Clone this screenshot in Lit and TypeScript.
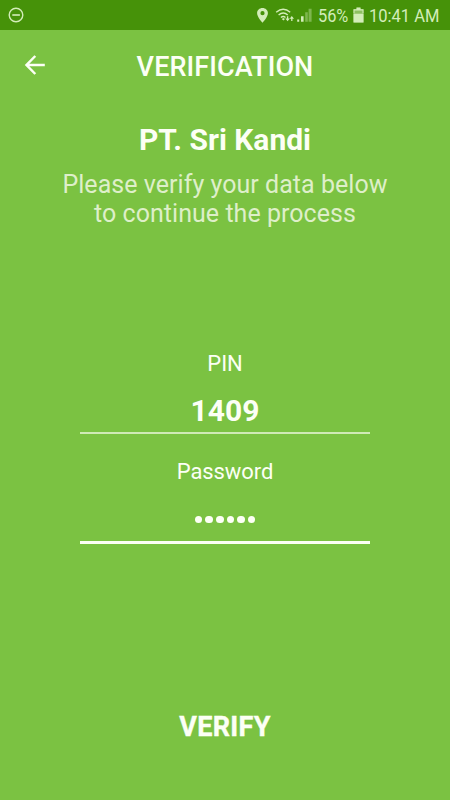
import { LitElement, html, css } from "lit";
import { customElement, property } from "lit/decorators.js";

@customElement("status-bar")
class StatusBar extends LitElement {
  static styles = css`
    :host { display: flex; height: 30px; background: #469209; color: #d3edb9; align-items: center; justify-content: space-between; }
    svg { display: block; flex: none; }
    .notice { margin-left: 8px; }
    .right { display: flex; align-items: center; width: 194px; height: 30px; }
    .wifi { margin-left: 6px; }
    .bars { margin-left: 1px; }
    .battery { margin-left: 5px; }
    .text { font-size: 19px; line-height: 30px; height: 29px; white-space: nowrap; transform-origin: 0 50%; }
    .percent { width: 30px; margin-left: 6px; transform: scaleX(0.86); }
    .clock { width: 72px; margin-left: 5px; transform: scaleX(0.87); }
  `;
  render() {
    return html`
      <svg class="notice" width="16" height="16" viewBox="0 0 16 16" fill="none" stroke="currentColor" stroke-width="1.4">
        <circle cx="8" cy="8" r="6.8"></circle><path d="M4.3 8h7.6" stroke-width="1.6"></path>
      </svg>
      <div class="right">
        <svg width="13" height="18" viewBox="0 0 13 18" fill="currentColor">
          <path fill-rule="evenodd" d="M6.5 2C3.500 2 1.100 4.200 1.100 7.200c0 3.800 5.400 9.500 5.400 9.500s5.400-5.700 5.400-9.500C11.900 4.200 9.500 2 6.500 2zm0 3.100a2.100 2.100 0 1 1 0 4.200 2.100 2.100 0 0 1 0-4.200z"></path>
        </svg>
        <svg class="wifi" width="20" height="18" viewBox="0 0 20 18" fill="none" stroke="currentColor" stroke-width="1.4">
          <path d="M1.200 6.300Q8.200.4 15.200 6.300"></path>
          <path d="M3.600 9Q8.200 5 12.800 9"></path>
          <path d="M5.900 11.500Q8.200 9.600 10.500 11.500"></path>
          <path d="M6.800 12.900l1.600 1.700 1.600-1.700-1.600-.9z" fill="currentColor" stroke="none"></path>
          <path d="M12.600 10.300v3.500M16.800 15v-3.500" stroke-width="1.300"></path>
          <path d="M10.400 12.500h4.400l-2.200 2.700zM14.600 12.700H19L16.800 10z" fill="currentColor" stroke="none"></path>
        </svg>
        <svg class="bars" width="16" height="18" viewBox="0 0 16 18" fill="currentColor">
          <path d="M1.200 13.500h2v2.200h-2zM5 10.300h2.600v5.400H5z"></path>
          <path d="M9.200 6.300h2.600v9.400H9.200zM12.600 2.700h3v13h-3z" opacity=".4"></path>
        </svg>
        <span class="text percent">56%</span>
        <svg class="battery" width="11" height="18" viewBox="0 0 11 18" fill="currentColor">
          <path d="M3.500 1.700h4v1.500h3v13.200H.5V3.200h3z" opacity=".5"></path>
          <path d="M3.500 1.500h4v1.700h3v4h-1V4.500h-8v2.700h-1v-4h3zM.5 7.700h10v8.700H.5z"></path>
        </svg>
        <span class="text clock">10:41 AM</span>
      </div>`;
  }
}

@customElement("data-field")
class DataField extends LitElement {
  @property() label = "";
  @property() value = "";
  @property({ type: Boolean, reflect: true }) secret = false;
  static styles = css`
    :host { display: block; width: 290px; margin: 0 auto; text-align: center; color: #fcfff5; }
    .label { font-size: 22px; line-height: 26px; height: 26px; letter-spacing: -0.1px; }
    .value { font-size: 30px; font-weight: 700; line-height: 36px; height: 36px; margin-top: 16px; border-bottom: 2px solid #d0eab6; padding-bottom: 3px; }
    :host([secret]) .value { border-bottom: 3px solid #fcfff5; display: flex; justify-content: center; align-items: center; gap: 3px; margin-top: 17px; padding-bottom: 3px; }
    .dot { width: 7.600px; height: 7.600px; border-radius: 50%; background: currentColor; }
  `;
  render() {
    return html`
      <div class="label">${this.label}</div>
      <div class="value">${this.secret ? Array.from(this.value, () => html`<span class="dot"></span>`) : this.value}</div>`;
  }
}

@customElement("app-root")
class AppRoot extends LitElement {
  static styles = css`
    :host { display: flex; flex-direction: column; height: 800px; background: #7bc242; color: #fcfff5; font-family: Roboto, sans-serif; }
    header { display: grid; grid-template-columns: 70px 1fr 70px; align-items: center; height: 72px; }
    .back { display: block; margin-left: 24px; margin-bottom: 3px; }
    h1, h2, p { margin: 0; text-align: center; white-space: nowrap; }
    h1 { font-size: 27px; font-weight: 500; line-height: 32px; padding-top: 2px; letter-spacing: 0.1px; }
    h2 { font-size: 30px; font-weight: 700; line-height: 34px; margin-top: 21px; }
    p { font-size: 25px; line-height: 29.300px; color: #deefc9; margin-top: 13px; letter-spacing: 0.04px; }
    .fields { margin-top: 122px; display: flex; flex-direction: column; gap: 25px; }
    .verify { margin: auto auto 57px; padding: 0; border: 0; background: none; color: inherit; font: 700 27px/32px Roboto, sans-serif; letter-spacing: 0.3px; -webkit-text-stroke: 0.4px currentColor; }
  `;
  render() {
    return html`
      <status-bar></status-bar>
      <header>
        <svg class="back" width="22" height="22" viewBox="0 0 22 22" fill="none" stroke="currentColor" stroke-width="2.500">
          <path d="M20.800 11H3M11.300 2 2.500 11l8.800 9"></path>
        </svg>
        <h1>VERIFICATION</h1>
      </header>
      <h2>PT. Sri Kandi</h2>
      <p>Please verify your data below<br />to continue the process</p>
      <div class="fields">
        <data-field label="PIN" value="1409"></data-field>
        <data-field label="Password" value="140914" secret></data-field>
      </div>
      <button class="verify">VERIFY</button>`;
  }
}
